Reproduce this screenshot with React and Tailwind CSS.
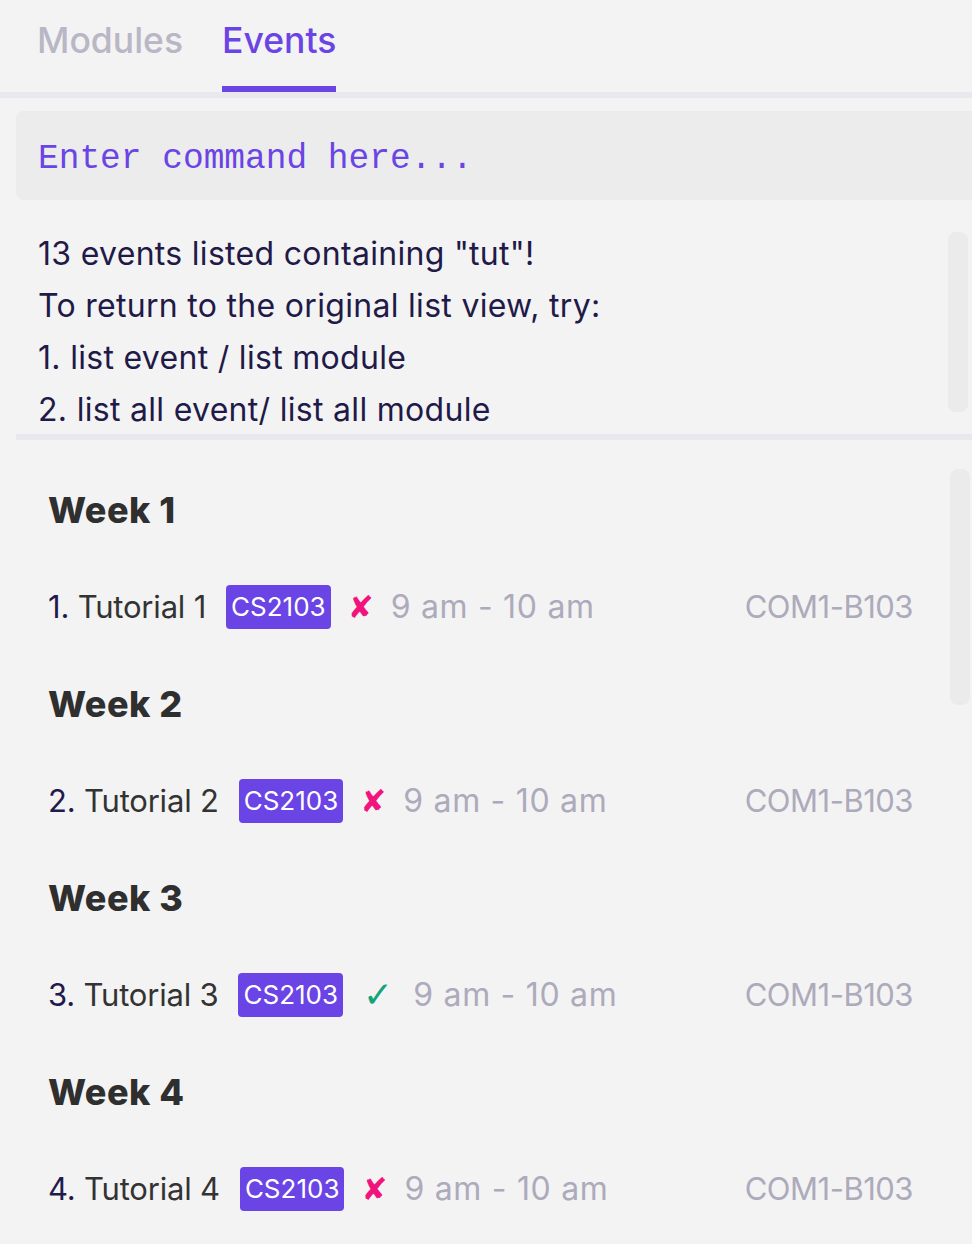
import { useState } from "react";

const events = [
    { week: 1, title: "Tutorial 1", done: false },
    { week: 2, title: "Tutorial 2", done: false },
    { week: 3, title: "Tutorial 3", done: true },
    { week: 4, title: "Tutorial 4", done: false },
];

const resultLines = [
    '13 events listed containing "tut"!',
    "To return to the original list view, try:",
    "1. list event / list module",
    "2. list all event/ list all module",
];

function EventRow({ index, event }) {
    return (
        <div className="h-[96px] flex items-center">
            <div className="flex items-center gap-5">
                <span className="text-[31px] text-[#333333] tracking-[-0.2px]">
                    <span className="text-[#221a4d]">{index}.</span> {event.title}
                </span>
                <span className="bg-[#6a44e4] text-white text-[26px] leading-none px-[5px] py-[9px] rounded-[4px]">
                    CS2103
                </span>
                {event.done ? (
                    <span className="text-[#14a37a] text-[36px] leading-none font-bold font-['DejaVu_Sans',sans-serif]">✓</span>
                ) : (
                    <span className="-mx-[3px] text-[#f0147c] text-[31px] leading-none font-['DejaVu_Sans',sans-serif]">✘</span>
                )}
                <span className="text-[32px] text-[#adaabb] tracking-[0.7px]">9 am - 10 am</span>
            </div>
            <span className="ml-auto text-[31px] text-[#adaabb] tracking-[-0.5px]">COM1-B103</span>
        </div>
    );
}

export default function App() {
    const [tab, setTab] = useState("events");

    return (
        <div className="w-[972px] h-[1244px] overflow-hidden bg-[#f3f3f3] font-['Inter',sans-serif]">

            {/* TABS */}
            <div className="h-[92px] flex pl-[37px] gap-[39px]">
                <button
                    onClick={() => setTab("modules")}
                    className={`h-full flex items-center pb-[4px] text-[35.5px] font-medium border-b-[6px] ${tab === "modules" ? "text-[#6a44e4] border-[#6a44e4]" : "text-[#b9b6c5] border-transparent"}`}
                >
                    Modules
                </button>
                <button
                    onClick={() => setTab("events")}
                    className={`h-full flex items-center pb-[4px] text-[35.5px] font-medium border-b-[6px] ${tab === "events" ? "text-[#6a44e4] border-[#6a44e4]" : "text-[#b9b6c5] border-transparent"}`}
                >
                    Events
                </button>
            </div>
            <div className="h-[6px] bg-[#e8e8ee]" />

            {/* COMMAND BOX */}
            <div className="mt-[13px] ml-4 h-[89px] bg-[#ececec] rounded-l-lg flex items-center pl-[22px] pt-[6px]">
                <span className="font-['Liberation_Mono',monospace] text-[34.5px] text-[#6a44e4]">
                    Enter command here...
                </span>
            </div>

            {/* RESULT */}
            <div className="relative ml-4 h-[234px] overflow-hidden pl-[22px] pt-[28px]">
                {resultLines.map((line) => (
                    <p key={line} className="text-[32px] leading-[52px] text-[#1f1a47] tracking-[0.3px]">
                        {line}
                    </p>
                ))}
                <div className="absolute right-[4px] top-[32px] w-[20px] h-[180px] rounded-lg bg-[#ebebeb]" />
            </div>
            <div className="ml-4 h-[6px] bg-[#e8e8ee]" />

            {/* LIST */}
            <div className="relative ml-4 pl-8 pr-[59px] pt-[21px]">
                {events.map((ev, i) => (
                    <div key={ev.week}>
                        <div className="h-[98px] flex items-center">
                            <h3 className="text-[36px] font-extrabold text-[#2f2f2f] tracking-[0.5px]">Week {ev.week}</h3>
                        </div>
                        <EventRow index={i + 1} event={ev} />
                    </div>
                ))}
                <div className="absolute right-[2px] top-[29px] w-[20px] h-[236px] rounded-lg bg-[#ebebeb]" />
            </div>
        </div>
    );
}
